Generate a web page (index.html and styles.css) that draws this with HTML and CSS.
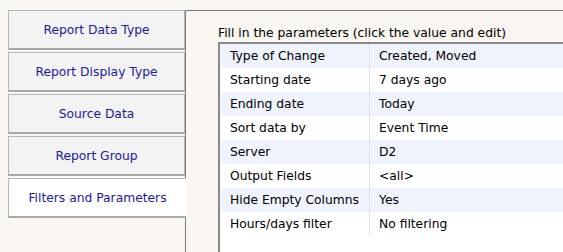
FILE: index.html
```html
<!DOCTYPE html>
<html>
<head>
<meta charset="utf-8">
<link rel="stylesheet" href="styles.css">
</head>
<body>
<div class="layout">
  <nav class="tabs">
    <div class="tab">Report Data Type</div>
    <div class="tab">Report Display Type</div>
    <div class="tab">Source Data</div>
    <div class="tab">Report Group</div>
    <div class="tab active">Filters and Parameters</div>
  </nav>
  <section class="panel">
    <div class="hint">Fill in the parameters (click the value and edit)</div>
    <div class="grid-box">
      <table class="params">
        <tr><td class="k">Type of Change</td><td class="v">Created, Moved</td></tr>
        <tr><td class="k">Starting date</td><td class="v">7 days ago</td></tr>
        <tr><td class="k">Ending date</td><td class="v">Today</td></tr>
        <tr><td class="k">Sort data by</td><td class="v">Event Time</td></tr>
        <tr><td class="k">Server</td><td class="v">D2</td></tr>
        <tr><td class="k">Output Fields</td><td class="v">&lt;all&gt;</td></tr>
        <tr><td class="k">Hide Empty Columns</td><td class="v">Yes</td></tr>
        <tr><td class="k">Hours/days filter</td><td class="v">No filtering</td></tr>
      </table>
    </div>
  </section>
</div>
</body>
</html>
```
FILE: styles.css
```css
html, body {
  margin: 0;
  padding: 0;
  height: 100%;
  overflow: hidden;
}
body {
  background: #f9f5f0;
  font-family: "DejaVu Sans", Verdana, sans-serif;
  font-size: 12.3px;
  color: #000;
}
.layout {
  display: flex;
  height: 252px;
}
.tabs {
  display: flex;
  flex-direction: column;
  gap: 2px;
  padding: 10px 0 0 8px;
  width: 177px;
  flex: none;
  position: relative;
  z-index: 1;
}
.tab {
  box-sizing: border-box;
  height: 40px;
  border: 1px solid #b6b6b6;
  border-bottom: 2px solid #a8a8a8;
  background: #f3f3f3;
  color: #1e1a9c;
  display: flex;
  align-items: center;
  justify-content: center;
}
.tab.active {
  background: #fff;
  border-right: none;
  margin-right: -1px;
}
.panel {
  flex: 1;
  margin-top: 10px;
  border-top: 1px solid #7a7a7a;
  border-left: 1px solid #7a7a7a;
  padding: 14px 0 0 32px;
  display: flex;
  flex-direction: column;
  min-width: 0;
  overflow: hidden;
}
.hint {
  line-height: 17px;
  height: 17px;
  white-space: nowrap;
}
.grid-box {
  flex: 1;
  background: #fff;
  border-top: 2px solid #8a8a8a;
  border-left: 2px solid #8a8a8a;
  margin-right: -40px;
}
.params {
  border-collapse: collapse;
  width: 100%;
}
.params td {
  height: 24px;
  padding: 0;
  vertical-align: middle;
  white-space: nowrap;
}
.params tr:nth-child(odd) {
  background: #eef3fd;
}
.params .k {
  width: 139px;
  padding-left: 10px;
  border-right: 1px solid #dfe1e8;
}
.params .v {
  padding-left: 9px;
}
```
